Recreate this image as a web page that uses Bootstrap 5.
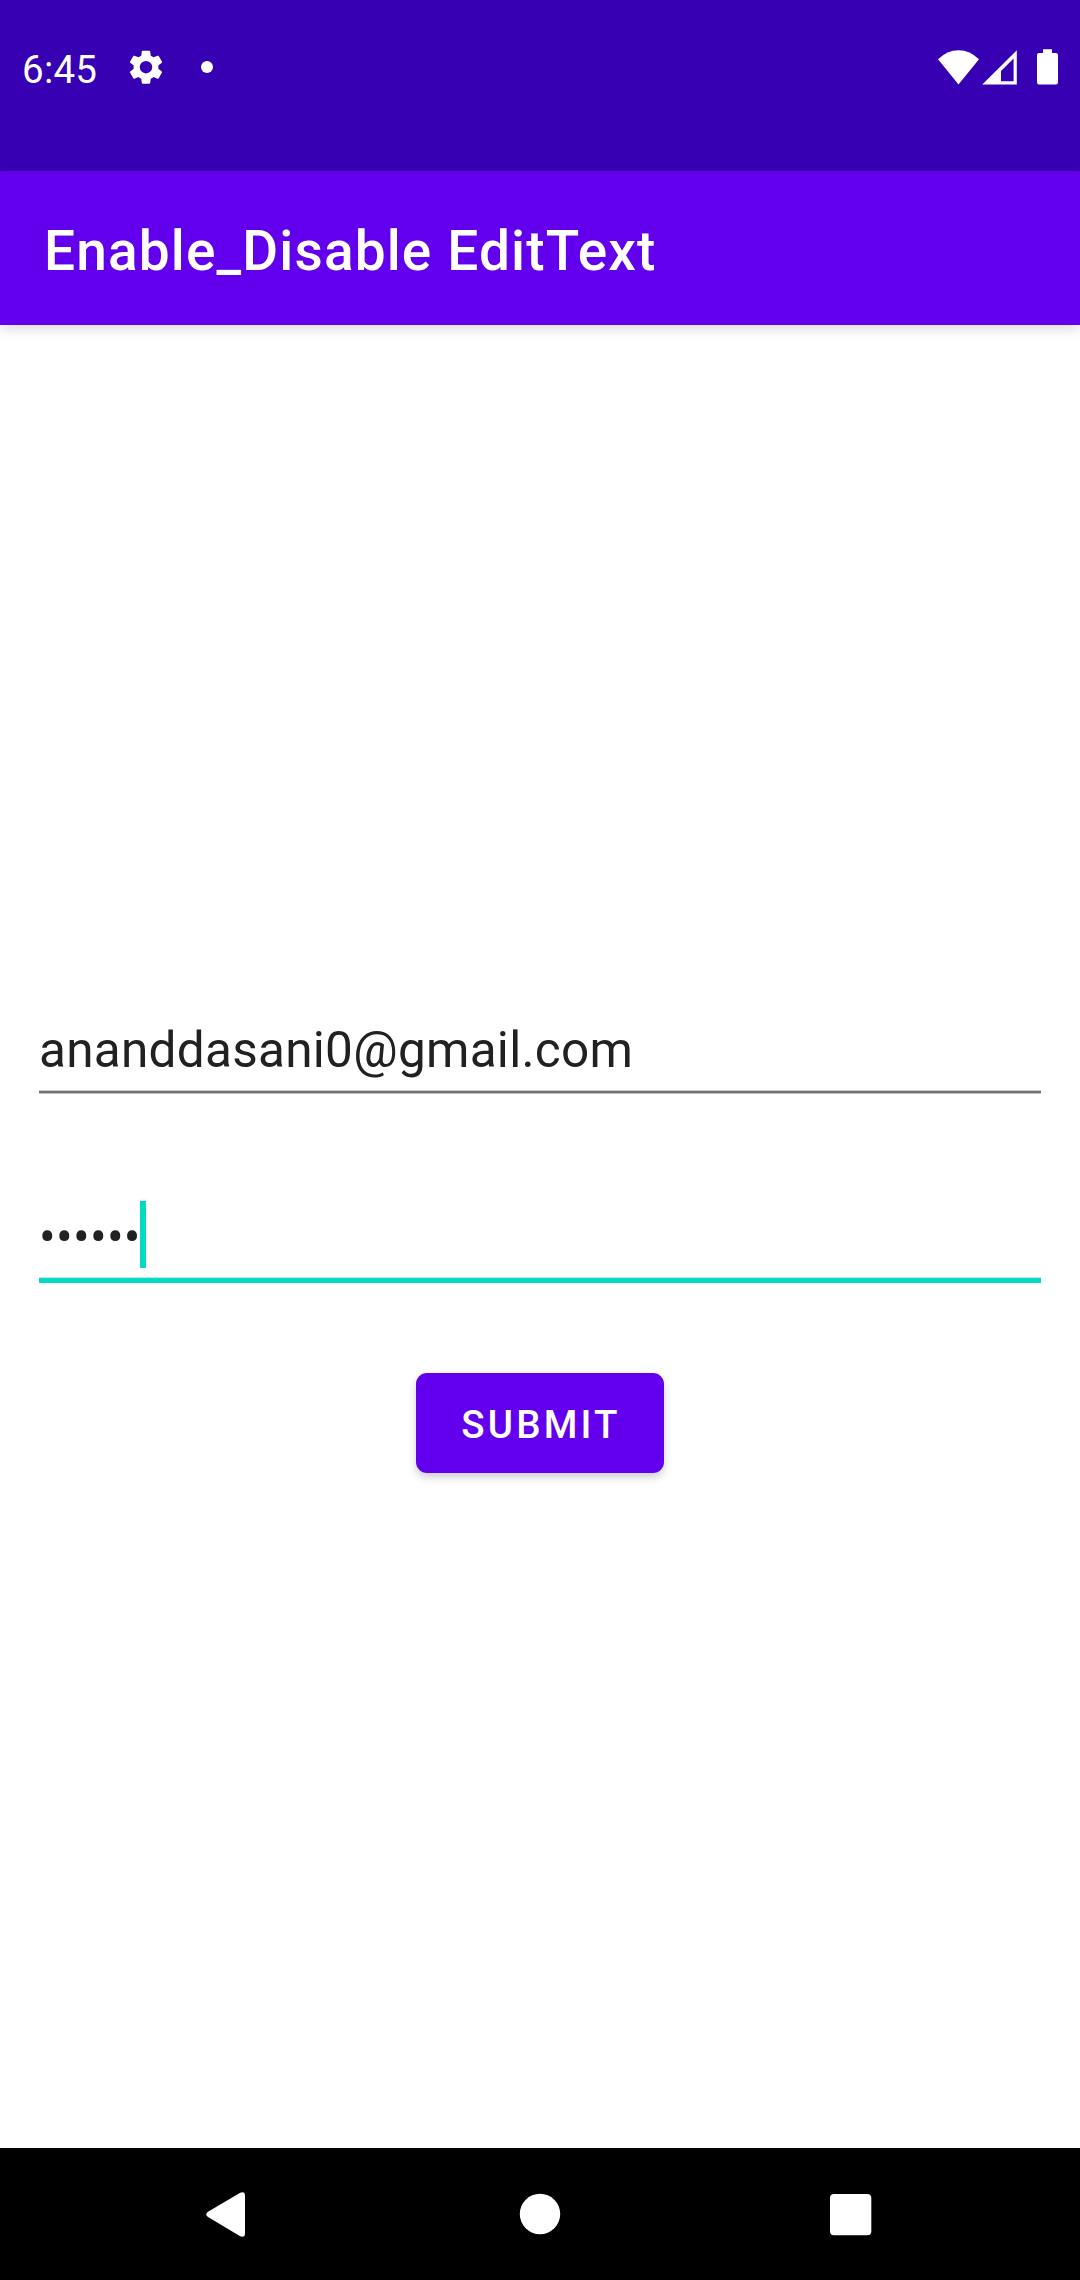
<!DOCTYPE html>
<html lang="en">
<head>
<meta charset="utf-8">
<meta name="viewport" content="width=device-width, initial-scale=1">
<title>Enable_Disable EditText</title>
<link href="https://cdn.jsdelivr.net/npm/bootstrap@5.3.0/dist/css/bootstrap.min.css" rel="stylesheet">
<style>
  body { font-family: Roboto, "Noto Sans", sans-serif; color: #212121; }
  .screen { width: 1080px; height: 2280px; }
  .status-bar { height: 171px; padding: 43px 22px 0; background: #3700b3; }
  .status-time { font-size: 38.5px; line-height: 50px; letter-spacing: .25px; padding-top: 2px; }
  .status-bar svg, .nav-keys svg { display: block; }
  .gear-icon { margin-left: 28px; }
  .dot-icon { margin-left: 32px; }
  .app-bar { height: 154px; padding: 5px 44px 0; background: #6200ee; box-shadow: 0 3px 12px rgba(0,0,0,.16); }
  .app-title { font-size: 55px; line-height: 64px; letter-spacing: 1.13px; font-weight: 500; }
  .form-area { padding: 689px 39px 0; }
  .edit-field { height: 76px; font-size: 49.5px; line-height: 72px; letter-spacing: .27px; }
  .field-line { height: 4px; background: linear-gradient(#cbcbcb 0 1px, #747474 1px 3px, #c2c2c2 3px); }
  .secret-field { height: 67px; margin-top: 107px; line-height: 73px; }
  .caret { width: 6px; height: 67px; background: #03dac5; margin-left: -2px; }
  .secret-dots { width: 103px; }
  .field-line-active { height: 6px; margin-top: 9px; background: linear-gradient(#b5f3ec 0 1px, #03dac5 1px); }
  .btn-submit { --bs-btn-color: #fff; --bs-btn-bg: #6200ee; --bs-btn-hover-bg: #5600d1; --bs-btn-hover-color: #fff;
    width: 248px; height: 100px; margin-top: 90px; padding: 3px 0 0 2px; border: 0; border-radius: 11px;
    font-size: 38.5px; line-height: 46px; font-weight: 500; letter-spacing: 3.2px; box-shadow: 0 4px 8px rgba(0,0,0,.2); }
  .nav-keys { height: 132px; }
</style>
</head>
<body>
<div class="screen d-flex flex-column bg-white overflow-hidden">
  <header class="status-bar d-flex align-items-start justify-content-between text-white">
    <div class="d-flex align-items-start">
      <span class="status-time">6:45</span>
      <svg class="gear-icon" width="42" height="48" viewBox="0 0 42 48" fill="#fff"><path transform="translate(.3 3.5) scale(1.725)" d="M19.14 12.94c.04-.3.06-.61.06-.94 0-.32-.02-.64-.07-.94l2.03-1.58c.18-.14.23-.41.12-.61l-1.92-3.32c-.12-.22-.37-.29-.59-.22l-2.39.96c-.5-.38-1.03-.7-1.62-.94L14.4 2.81c-.04-.24-.24-.41-.48-.41h-3.84c-.24 0-.43.17-.47.41l-.36 2.54c-.59.24-1.13.57-1.62.94l-2.39-.96c-.22-.08-.47 0-.59.22L2.74 8.87c-.12.21-.08.47.12.61l2.03 1.58c-.05.3-.09.63-.09.94s.02.64.07.94l-2.03 1.58c-.18.14-.23.41-.12.61l1.92 3.32c.12.22.37.29.59.22l2.39-.96c.5.38 1.03.7 1.62.94l.36 2.54c.05.24.24.41.48.41h3.84c.24 0 .44-.17.47-.41l.36-2.54c.59-.24 1.13-.56 1.62-.94l2.39.96c.22.08.47 0 .59-.22l1.92-3.32c.12-.22.07-.47-.12-.61l-2.01-1.58zM12 15.6A3.6 3.6 0 1 1 12 8.4a3.6 3.6 0 0 1 0 7.2z"/></svg>
      <svg class="dot-icon" width="16" height="48" viewBox="0 0 16 48" fill="#fff"><circle cx="8" cy="24" r="6"/></svg>
    </div>
    <svg width="122" height="48" viewBox="936 43 122 48" fill="#fff">
      <path d="M958.5 84.5 938 59.3Q947 50.2 958.5 50.2T979 59.3z"/>
      <path fill-rule="evenodd" d="M982.3 84.5H1016.8V50.3zM1001 81.3V71L1013.6 58.6V81.3z"/>
      <path d="M1043 49.3h9V53h4a2 2 0 0 1 2 2v27.5a2 2 0 0 1-2 2h-17a2 2 0 0 1-2-2V55a2 2 0 0 1 2-2h4z"/>
    </svg>
  </header>
  <nav class="app-bar d-flex align-items-center text-white">
    <span class="app-title">Enable_Disable EditText</span>
  </nav>
  <main class="form-area flex-grow-1 d-flex flex-column">
    <div class="edit-field">ananddasani0@gmail.com</div>
    <div class="field-line"></div>
    <div class="edit-field secret-field d-flex"><span class="secret-dots">••••••</span><span class="caret"></span></div>
    <div class="field-line-active"></div>
    <button type="button" class="btn btn-submit align-self-center">SUBMIT</button>
  </main>
  <footer class="nav-keys bg-black">
    <svg width="1080" height="132" viewBox="0 2148 1080 132" fill="#fff">
      <path d="M208 2211.7 240.2 2192.7Q245 2190.8 245 2195.5V2233.5Q245 2238 240.2 2236.3L208 2217Q204.4 2214.4 208 2211.7z"/>
      <circle cx="540" cy="2214" r="20.2"/>
      <rect x="830" y="2194" width="41.3" height="41.3" rx="4"/>
    </svg>
  </footer>
</div>
<script src="https://cdn.jsdelivr.net/npm/bootstrap@5.3.0/dist/js/bootstrap.bundle.min.js"></script>
</body>
</html>
